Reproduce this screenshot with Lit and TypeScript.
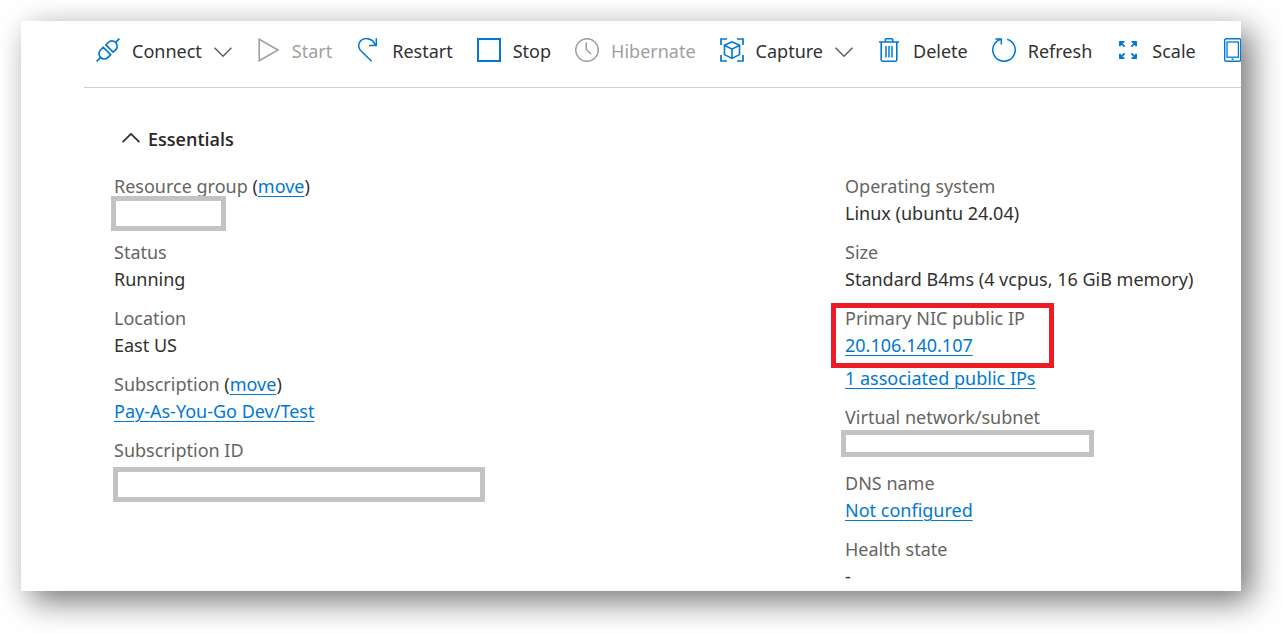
import { LitElement, html, css, svg, nothing } from "lit";
import type { TemplateResult } from "lit";
import { customElement, property, state } from "lit/decorators.js";
import { classMap } from "lit/directives/class-map.js";

type Icon = ReturnType<typeof svg>;

const icons: Record<string, Icon> = {
  connect: svg`<g stroke-width="1.7"><path d="M.6 23.4 4.6 19.4M19.4 4.6 23.4.6"/><path d="M7.3 9.3 14.7 16.7 12 19.4a5.1 5.1 0 0 1-7.4 0 5.1 5.1 0 0 1 0-7.4z"/><path d="M9.9 6.9 17.1 14.1 19.6 11.9a5.1 5.1 0 0 0 0-7.4 5.1 5.1 0 0 0-7.3 0z"/></g>`,
  start: svg`<path d="M3.2 1.2V22.8L22 12z" stroke-width="1.6"/>`,
  restart: svg`<path d="M15.5 23.3 4.4 12.2A7.6 7.6 0 0 1 4.2 3.2C8-1 16-.5 19.2 6.6M20.3.3V7.4H13" stroke-width="1.5"/>`,
  stop: svg`<rect x="1" y="1" width="22" height="22" stroke-width="2"/>`,
  hibernate: svg`<circle cx="12" cy="12" r="11.3" stroke-width="1.5"/><path d="M11.3 4.5V11.5L16 16" stroke-width="1.6"/>`,
  capture: svg`<path d="M1 7V1H7M17 1H23V7M23 17V23H17M7 23H1V17" stroke-width="1.7"/><path d="M12 3.8 19.5 7.2V16.6L12 20.4 4.5 16.6V7.2zM4.5 7.2 12 11.2 19.5 7.2M12 11.2V20.4" stroke-width="1.6"/>`,
  delete: svg`<path d="M2 4H22M8.3 3.8V1.6Q8.3.8 9.1.8H14.9Q15.7.8 15.7 1.6V3.8M4.2 4V21.7Q4.2 23.2 5.7 23.2H18.3Q19.8 23.2 19.8 21.7V4" stroke-width="1.6"/><path d="M9 8V19.5M12 8V19.5M15 8V19.5" stroke-width="1.5"/>`,
  refresh: svg`<path d="M15.2 1.2A11.2 11.2 0 1 1 8.8 1.2M3.3.9H9.3V6.5" stroke-width="1.5"/>`,
  scale: svg`<path d="M4 8.3V4H8.3M4 4 8.6 8.6M15.7 4H20V8.3M20 4 15.4 8.6M4 15.7V20H8.3M4 20 8.6 15.4M20 15.7V20H15.7M20 20 15.4 15.4" stroke-width="1.9"/>`,
  device: svg`<rect x="4.7" y=".7" width="16" height="22.6" rx="1.4" stroke-width="1.4"/><rect x="7" y="4" width="11.4" height="15.2" stroke-width="1.3"/><path d="M11.6 21.2H13.6" stroke-width="1.4"/>`,
};

interface Command {
  id: string;
  label: string;
  menu?: boolean;
  disabled?: boolean;
}

const commands: Command[] = [
  { id: "connect", label: "Connect", menu: true },
  { id: "start", label: "Start", disabled: true },
  { id: "restart", label: "Restart" },
  { id: "stop", label: "Stop" },
  { id: "hibernate", label: "Hibernate", disabled: true },
  { id: "capture", label: "Capture", menu: true },
  { id: "delete", label: "Delete" },
  { id: "refresh", label: "Refresh" },
  { id: "scale", label: "Scale" },
  { id: "device", label: "" },
];

@customElement("command-button")
class CommandButton extends LitElement {
  @property({ attribute: false }) command!: Command;

  static styles = css`
    :host {
      display: block;
      flex: none;
    }
    .command {
      display: flex;
      align-items: center;
      gap: 12px;
      height: 32px;
      padding: 0;
      border: 0;
      background: none;
      color: #323130;
      font: 18px/24px "Noto Sans", "Open Sans", sans-serif;
      cursor: pointer;
    }
    .command:disabled {
      color: #a19f9d;
      cursor: default;
    }
    .icon {
      width: 24px;
      height: 24px;
      fill: none;
      stroke: #0078d4;
    }
    .text {
      padding-top: 2px;
    }
    .command:disabled .icon {
      stroke: #a19f9d;
    }
    .chevron {
      width: 18px;
      height: 10px;
      margin-top: 4px;
      fill: none;
      stroke: #605e5c;
      stroke-width: 1.5;
    }
  `;

  render() {
    const { id, label, menu, disabled } = this.command;
    return html`<button
      class="command"
      type="button"
      ?disabled=${disabled}
      aria-label=${label ? nothing : "More"}
    >
      <svg class="icon" viewBox="0 0 24 24" aria-hidden="true">${icons[id]}</svg>
      ${label ? html`<span class="text">${label}</span>` : nothing}
      ${menu
        ? html`<svg class="chevron" viewBox="0 0 18 10" aria-hidden="true">
            <path d="M.5 .7 9 9.2 17.5 .7" />
          </svg>`
        : nothing}
    </button>`;
  }
}

interface Field {
  label: string;
  move?: boolean;
  text?: string;
  links?: string[];
  mask?: string;
  highlight?: boolean;
}

const placement: Field[] = [
  { label: "Resource group", move: true, mask: "group" },
  { label: "Status", text: "Running" },
  { label: "Location", text: "East US" },
  { label: "Subscription", move: true, links: ["Pay-As-You-Go Dev/Test"] },
  { label: "Subscription ID", mask: "subscription" },
];

const machine: Field[] = [
  { label: "Operating system", text: "Linux (ubuntu 24.04)" },
  { label: "Size", text: "Standard B4ms (4 vcpus, 16 GiB memory)" },
  {
    label: "Primary NIC public IP",
    links: ["20.106.140.107", "1 associated public IPs"],
    highlight: true,
  },
  { label: "Virtual network/subnet", mask: "network" },
  { label: "DNS name", links: ["Not configured"] },
  { label: "Health state", text: "-" },
];

@customElement("app-root")
class AppRoot extends LitElement {
  @state() private open = true;

  static styles = css`
    :host {
      display: block;
      overflow: hidden;
      background: #fff;
      color: #323130;
      font: 18px/27px "Noto Sans", "Open Sans", sans-serif;
    }
    .panel {
      margin: 21px 42px 42px 21px;
      padding-bottom: 1px;
      background: #fff;
      box-shadow: 10px 10px 30px rgba(0, 0, 0, 0.55);
    }
    .toolbar {
      display: flex;
      gap: 24px;
      margin-left: 63px;
      padding: 13px 0 21px 12px;
      border-bottom: 1px solid #d2d0ce;
      overflow: hidden;
    }
    .essentials {
      padding: 38px 0 0 93px;
    }
    .toggle {
      display: flex;
      align-items: center;
      gap: 8px;
      margin: 0 0 20px 8px;
      padding: 0;
      border: 0;
      background: none;
      color: #292827;
      font: 600 18px/27px "Open Sans", "Noto Sans", sans-serif;
      cursor: pointer;
    }
    .caret {
      width: 18px;
      height: 10px;
      margin-bottom: 4px;
      fill: none;
      stroke: #323130;
      stroke-width: 1.8;
    }
    .caret.closed {
      transform: rotate(180deg);
    }
    .columns {
      display: grid;
      grid-template-columns: 24fr 13fr;
    }
    .fields {
      display: flex;
      flex-direction: column;
      gap: 12px;
      margin: 0;
    }
    .field {
      position: relative;
    }
    .label {
      color: #666462;
    }
    .paren {
      color: #323130;
    }
    .value {
      position: relative;
      min-height: 27px;
      margin: 0;
    }
    .value + .value {
      margin-top: 6px;
    }
    .link {
      color: #0078d4;
      text-decoration: underline;
      text-decoration-thickness: 1px;
      text-underline-offset: 3px;
    }
    .mask {
      position: absolute;
      box-sizing: border-box;
      border: 5px solid #c3c3c3;
      background: #fff;
    }
    .mask.group {
      top: -4px;
      left: -3px;
      width: 115px;
      height: 35px;
    }
    .mask.subscription {
      top: 3px;
      left: -1px;
      width: 372px;
      height: 35px;
    }
    .mask.network {
      top: -1px;
      left: -4px;
      width: 253px;
      height: 27px;
    }
    .highlight {
      position: absolute;
      top: -2px;
      left: -14px;
      box-sizing: border-box;
      width: 223px;
      height: 65px;
      border: 5px solid #ed1c24;
      pointer-events: none;
    }
  `;

  private link(text: string): TemplateResult {
    return html`<a class="link" href="#">${text}</a>`;
  }

  private field(f: Field): TemplateResult {
    return html`<div class="field">
      <dt class="label">
        ${f.label}
        ${f.move
          ? html`<span class="paren">(${this.link("move")})</span>`
          : nothing}
      </dt>
      ${f.text ? html`<dd class="value">${f.text}</dd>` : nothing}
      ${f.links?.map((t) => html`<dd class="value">${this.link(t)}</dd>`)}
      ${f.mask
        ? html`<dd class="value">
            <span class=${classMap({ mask: true, [f.mask]: true })}></span>
          </dd>`
        : nothing}
      ${f.highlight ? html`<span class="highlight"></span>` : nothing}
    </div>`;
  }

  render() {
    return html`<main class="panel">
      <div class="toolbar" role="toolbar">
        ${commands.map(
          (c) => html`<command-button .command=${c}></command-button>`
        )}
      </div>
      <section class="essentials">
        <button
          class="toggle"
          type="button"
          aria-expanded=${this.open}
          @click=${() => (this.open = !this.open)}
        >
          <svg
            class=${classMap({ caret: true, closed: !this.open })}
            viewBox="0 0 18 10"
            aria-hidden="true"
          >
            <path d="M.6 9.2 9 .9 17.4 9.2" />
          </svg>
          Essentials
        </button>
        ${this.open
          ? html`<div class="columns">
              <dl class="fields">${placement.map((f) => this.field(f))}</dl>
              <dl class="fields">${machine.map((f) => this.field(f))}</dl>
            </div>`
          : nothing}
      </section>
    </main>`;
  }
}
